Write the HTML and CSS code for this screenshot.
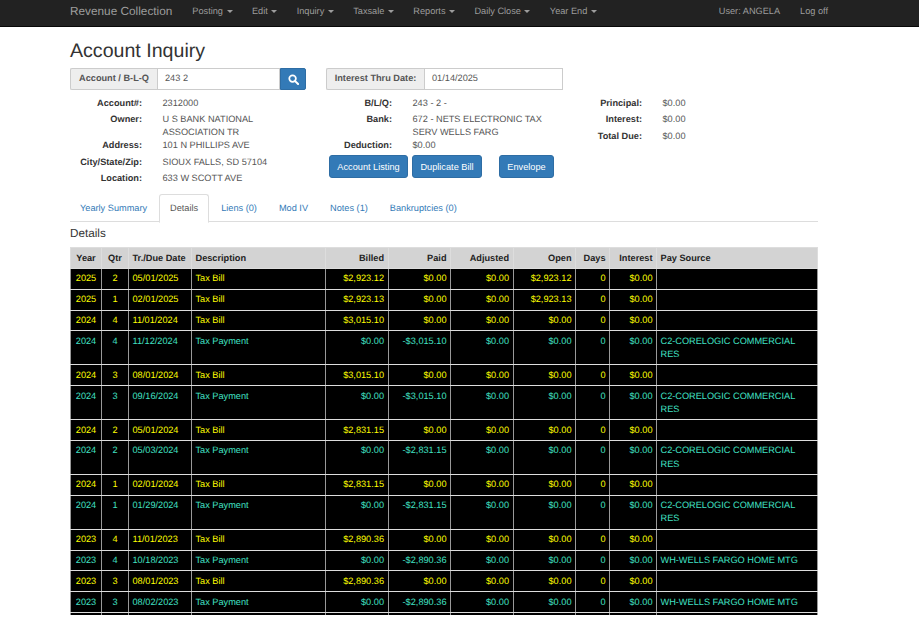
FILE: index.html
```html
<!DOCTYPE html>
<html lang="en">
<head>
    <meta charset="UTF-8">
    <title>Account Inquiry - Revenue Collection</title>
    <link rel="stylesheet" href="styles.css">
</head>
<body>

    <nav class="navbar">
        <a class="brand">Revenue Collection</a>
        <ul class="menu">
            <li>Posting <span class="caret"></span></li>
            <li>Edit <span class="caret"></span></li>
            <li>Inquiry <span class="caret"></span></li>
            <li>Taxsale <span class="caret"></span></li>
            <li>Reports <span class="caret"></span></li>
            <li>Daily Close <span class="caret"></span></li>
            <li>Year End <span class="caret"></span></li>
        </ul>
        <ul class="menu menu-right">
            <li>User: ANGELA</li>
            <li>Log off</li>
        </ul>
    </nav>

    <div class="container">
        <h1>Account Inquiry</h1>

        <div class="search-row">
            <div class="input-group group-account">
                <span class="addon addon-account">Account / B-L-Q</span>
                <span class="field">243 2</span>
                <button class="search-btn">
                    <svg width="11" height="11" viewBox="0 0 12 12">
                        <circle cx="5" cy="5" r="3.6" fill="none" stroke="#fff" stroke-width="1.9"/>
                        <path d="M7.8 7.8 L11 11" stroke="#fff" stroke-width="2.2" stroke-linecap="round"/>
                    </svg>
                </button>
            </div>
            <div class="input-group group-date">
                <span class="addon addon-date">Interest Thru Date:</span>
                <span class="field">01/14/2025</span>
            </div>
        </div>

        <div class="info">
            <div class="info-col col-account">
                <div class="pair"><b>Account#:</b><span>2312000</span></div>
                <div class="pair"><b>Owner:</b><span>U S BANK NATIONAL ASSOCIATION TR</span></div>
                <div class="pair tight"><b>Address:</b><span>101 N PHILLIPS AVE</span></div>
                <div class="pair"><b>City/State/Zip:</b><span>SIOUX FALLS, SD 57104</span></div>
                <div class="pair"><b>Location:</b><span>633 W SCOTT AVE</span></div>
            </div>
            <div class="info-col col-bank">
                <div class="pair"><b>B/L/Q:</b><span>243 - 2 -</span></div>
                <div class="pair"><b>Bank:</b><span>672 - NETS ELECTRONIC TAX SERV WELLS FARG</span></div>
                <div class="pair tight"><b>Deduction:</b><span>$0.00</span></div>
                <div class="buttons">
                    <button class="btn btn-listing">Account Listing</button>
                    <button class="btn btn-dup">Duplicate Bill</button>
                    <button class="btn btn-last">Envelope</button>
                </div>
            </div>
            <div class="info-col col-total">
                <div class="pair"><b>Principal:</b><span>$0.00</span></div>
                <div class="pair"><b>Interest:</b><span>$0.00</span></div>
                <div class="pair"><b>Total Due:</b><span>$0.00</span></div>
            </div>
        </div>

        <ul class="tabs">
            <li>Yearly Summary</li>
            <li class="active">Details</li>
            <li>Liens (0)</li>
            <li>Mod IV</li>
            <li>Notes (1)</li>
            <li>Bankruptcies (0)</li>
        </ul>

        <h4>Details</h4>

        <table class="details">
            <colgroup>
                <col class="c-year"><col class="c-qtr"><col class="c-date"><col class="c-desc">
                <col class="c-money"><col class="c-money"><col class="c-money"><col class="c-money">
                <col class="c-days"><col class="c-int"><col>
            </colgroup>
            <thead>
                <tr>
                    <th class="ctr">Year</th><th class="ctr">Qtr</th><th>Tr./Due Date</th><th>Description</th>
                    <th class="num">Billed</th><th class="num">Paid</th><th class="num">Adjusted</th><th class="num">Open</th>
                    <th class="num">Days</th><th class="num">Interest</th><th>Pay Source</th>
                </tr>
            </thead>
            <tbody>
                <tr class="bill"><td class="ctr">2025</td><td class="ctr">2</td><td>05/01/2025</td><td>Tax Bill</td><td class="num">$2,923.12</td><td class="num">$0.00</td><td class="num">$0.00</td><td class="num">$2,923.12</td><td class="num">0</td><td class="num">$0.00</td><td></td></tr>
                <tr class="bill"><td class="ctr">2025</td><td class="ctr">1</td><td>02/01/2025</td><td>Tax Bill</td><td class="num">$2,923.13</td><td class="num">$0.00</td><td class="num">$0.00</td><td class="num">$2,923.13</td><td class="num">0</td><td class="num">$0.00</td><td></td></tr>
                <tr class="bill"><td class="ctr">2024</td><td class="ctr">4</td><td>11/01/2024</td><td>Tax Bill</td><td class="num">$3,015.10</td><td class="num">$0.00</td><td class="num">$0.00</td><td class="num">$0.00</td><td class="num">0</td><td class="num">$0.00</td><td></td></tr>
                <tr class="pay"><td class="ctr">2024</td><td class="ctr">4</td><td>11/12/2024</td><td>Tax Payment</td><td class="num">$0.00</td><td class="num">-$3,015.10</td><td class="num">$0.00</td><td class="num">$0.00</td><td class="num">0</td><td class="num">$0.00</td><td>C2-CORELOGIC COMMERCIAL RES</td></tr>
                <tr class="bill"><td class="ctr">2024</td><td class="ctr">3</td><td>08/01/2024</td><td>Tax Bill</td><td class="num">$3,015.10</td><td class="num">$0.00</td><td class="num">$0.00</td><td class="num">$0.00</td><td class="num">0</td><td class="num">$0.00</td><td></td></tr>
                <tr class="pay"><td class="ctr">2024</td><td class="ctr">3</td><td>09/16/2024</td><td>Tax Payment</td><td class="num">$0.00</td><td class="num">-$3,015.10</td><td class="num">$0.00</td><td class="num">$0.00</td><td class="num">0</td><td class="num">$0.00</td><td>C2-CORELOGIC COMMERCIAL RES</td></tr>
                <tr class="bill"><td class="ctr">2024</td><td class="ctr">2</td><td>05/01/2024</td><td>Tax Bill</td><td class="num">$2,831.15</td><td class="num">$0.00</td><td class="num">$0.00</td><td class="num">$0.00</td><td class="num">0</td><td class="num">$0.00</td><td></td></tr>
                <tr class="pay"><td class="ctr">2024</td><td class="ctr">2</td><td>05/03/2024</td><td>Tax Payment</td><td class="num">$0.00</td><td class="num">-$2,831.15</td><td class="num">$0.00</td><td class="num">$0.00</td><td class="num">0</td><td class="num">$0.00</td><td>C2-CORELOGIC COMMERCIAL RES</td></tr>
                <tr class="bill"><td class="ctr">2024</td><td class="ctr">1</td><td>02/01/2024</td><td>Tax Bill</td><td class="num">$2,831.15</td><td class="num">$0.00</td><td class="num">$0.00</td><td class="num">$0.00</td><td class="num">0</td><td class="num">$0.00</td><td></td></tr>
                <tr class="pay"><td class="ctr">2024</td><td class="ctr">1</td><td>01/29/2024</td><td>Tax Payment</td><td class="num">$0.00</td><td class="num">-$2,831.15</td><td class="num">$0.00</td><td class="num">$0.00</td><td class="num">0</td><td class="num">$0.00</td><td>C2-CORELOGIC COMMERCIAL RES</td></tr>
                <tr class="bill"><td class="ctr">2023</td><td class="ctr">4</td><td>11/01/2023</td><td>Tax Bill</td><td class="num">$2,890.36</td><td class="num">$0.00</td><td class="num">$0.00</td><td class="num">$0.00</td><td class="num">0</td><td class="num">$0.00</td><td></td></tr>
                <tr class="pay"><td class="ctr">2023</td><td class="ctr">4</td><td>10/18/2023</td><td>Tax Payment</td><td class="num">$0.00</td><td class="num">-$2,890.36</td><td class="num">$0.00</td><td class="num">$0.00</td><td class="num">0</td><td class="num">$0.00</td><td>WH-WELLS FARGO HOME MTG</td></tr>
                <tr class="bill"><td class="ctr">2023</td><td class="ctr">3</td><td>08/01/2023</td><td>Tax Bill</td><td class="num">$2,890.36</td><td class="num">$0.00</td><td class="num">$0.00</td><td class="num">$0.00</td><td class="num">0</td><td class="num">$0.00</td><td></td></tr>
                <tr class="pay"><td class="ctr">2023</td><td class="ctr">3</td><td>08/02/2023</td><td>Tax Payment</td><td class="num">$0.00</td><td class="num">-$2,890.36</td><td class="num">$0.00</td><td class="num">$0.00</td><td class="num">0</td><td class="num">$0.00</td><td>WH-WELLS FARGO HOME MTG</td></tr>
                <tr class="stub"><td></td><td></td><td></td><td></td><td></td><td></td><td></td><td></td><td></td><td></td><td></td></tr>
            </tbody>
        </table>
    </div>

</body>
</html>
```

FILE: styles.css
```css
html, body {
    height: 618px;
    overflow: hidden;
}
body {
    margin: 0;
    background-color: #fff;
    color: #333;
    font-family: "Liberation Sans", Arial, sans-serif;
    font-size: 9.2px;
    line-height: 13.1px;
    text-rendering: geometricPrecision;
}

/* top bar */
.navbar {
    display: flex;
    align-items: center;
    box-sizing: border-box;
    height: 27px;
    padding: 0 0 3px 70px;
    background-color: #222;
    border-bottom: 1px solid #080808;
    color: #9d9d9d;
}
.brand {
    font-size: 11.8px;
    margin-right: 20px;
}
.menu {
    display: flex;
    gap: 19.4px;
    list-style: none;
    margin: 0;
    padding: 0;
}
.menu-right {
    gap: 20px;
    margin-left: auto;
    margin-right: 91px;
}
.caret {
    display: inline-block;
    margin-left: 1px;
    vertical-align: middle;
    border-top: 3px solid #9d9d9d;
    border-left: 3px solid transparent;
    border-right: 3px solid transparent;
}

/* page */
.container {
    width: 748px;
    margin-left: 70px;
}
h1 {
    font-size: 19.6px;
    font-weight: 500;
    line-height: 23px;
    margin: 13px 0 5px;
}
.search-row {
    display: flex;
    gap: 20px;
}
.input-group {
    display: flex;
    height: 22px;
}
.group-account {
    width: 236px;
}
.group-date {
    width: 237px;
}
.addon {
    display: flex;
    align-items: center;
    justify-content: center;
    box-sizing: border-box;
    background-color: #eee;
    border: 1px solid #ccc;
    border-right: none;
    border-radius: 2px 0 0 2px;
    font-weight: bold;
    color: #555;
}
.addon-account {
    width: 87px;
}
.addon-date {
    width: 98px;
}
.field {
    flex: 1;
    display: flex;
    align-items: center;
    padding-left: 7px;
    border: 1px solid #ccc;
    color: #555;
}
.search-btn {
    width: 26px;
    padding: 0;
    display: flex;
    align-items: center;
    justify-content: center;
    background-color: #337ab7;
    border: 1px solid #2e6da4;
    border-radius: 0 2px 2px 0;
}

.info {
    display: flex;
    margin-top: 3.5px;
}
.info-col {
    box-sizing: border-box;
}
.col-account {
    width: 250px;
}
.col-bank {
    width: 250px;
}
.pair {
    display: flex;
    margin-top: 3.3px;
}
.pair.tight {
    margin-top: 0;
}
.pair b {
    width: 72px;
    margin-right: 20.5px;
    text-align: right;
    flex-shrink: 0;
}
.pair span {
    color: #555;
}
.col-account .pair span {
    width: 125px;
}
.col-bank .pair span {
    width: 145px;
}
.col-total .pair b {
    width: 72px;
}
.buttons {
    display: flex;
    gap: 4px;
    margin-top: 3px;
    margin-left: 9px;
    white-space: nowrap;
}
.btn {
    height: 23px;
    padding: 0;
    background-color: #337ab7;
    border: 1px solid #2e6da4;
    border-radius: 3px;
    color: #fff;
    font-family: inherit;
    font-size: 9.2px;
}
.btn-listing {
    width: 79px;
}
.btn-dup {
    width: 70px;
}
.btn-last {
    width: 55px;
    margin-left: 13px;
}

/* tabs */
.tabs {
    display: flex;
    list-style: none;
    margin: 0;
    padding: 0;
    height: 27px;
    margin-top: 8.5px;
    border-bottom: 1px solid #ddd;
    color: #337ab7;
}
.tabs li {
    padding: 8px 10px 6px;
    margin-right: 2px;
    height: 13px;
}
.tabs li.active {
    color: #555;
    background-color: #fff;
    border: 1px solid #ddd;
    border-bottom-color: #fff;
    border-radius: 3px 3px 0 0;
    padding: 7px 10px 7px;
}
h4 {
    font-size: 11.7px;
    font-weight: 500;
    line-height: 14px;
    margin: 5px 0 6.5px;
    color: #333;
}

/* table */
.details {
    width: 748px;
    table-layout: fixed;
    border-collapse: collapse;
    background-color: #000;
}
.c-year { width: 31px; }
.c-qtr { width: 27px; }
.c-date { width: 63px; }
.c-desc { width: 134px; }
.c-money { width: 62.5px; }
.c-days { width: 34px; }
.c-int { width: 47px; }
.details th {
    background-color: #d3d3d3;
    color: #222;
    text-align: left;
    border: 1px solid #ddd;
    padding: 3.3px 3.5px;
    white-space: nowrap;
}
.details td {
    border: 1px solid #ddd;
    border-left-color: #999;
    border-right-color: #999;
    padding: 3.38px 3.5px;
    vertical-align: top;
}
.details .num {
    text-align: right;
}
.details .ctr {
    text-align: center;
}
.bill td {
    color: #ff0;
}
.pay td {
    color: #40e0c4;
}
.details .stub td {
    height: 2px;
    padding: 0;
    border-bottom: none;
}
```
